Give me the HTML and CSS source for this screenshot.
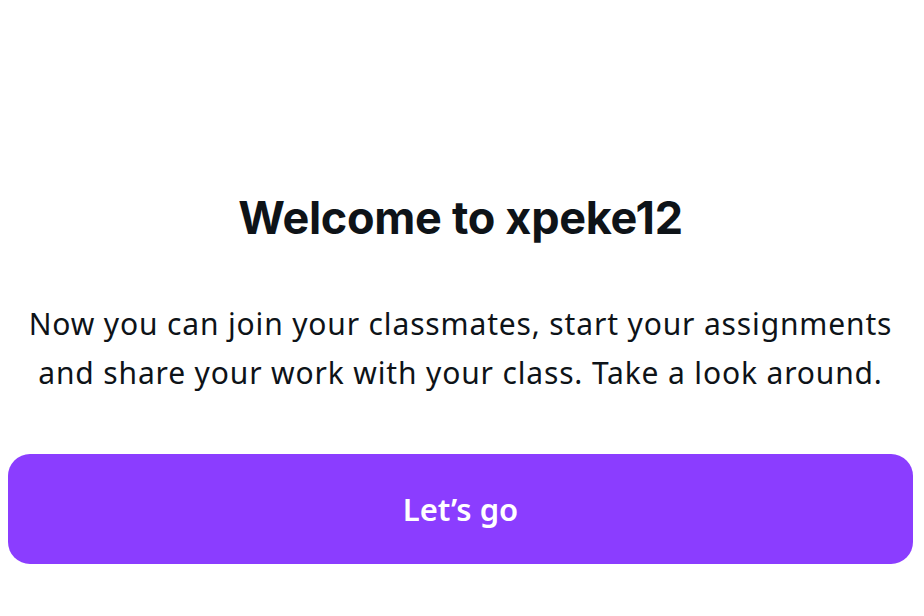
FILE: index.html
```html
<!DOCTYPE html>
<html lang="en">
<head>
<meta charset="utf-8">
<title>Welcome</title>
<link rel="stylesheet" href="styles.css">
</head>
<body>
  <main class="welcome">
    <h1 class="welcome-title">Welcome to xpeke12</h1>
    <p class="welcome-text">Now you can join your classmates, start your assignments and share your work with your class. Take a look around.</p>
    <button class="welcome-button" type="button">Let’s go</button>
  </main>
</body>
</html>
```

FILE: styles.css
```css
html, body {
  margin: 0;
  padding: 0;
  background: #ffffff;
}

body {
  font-family: "Noto Sans", "Open Sans", sans-serif;
  color: #0e1318;
}

.welcome {
  width: 905px;
  margin-left: 8px;
  padding-top: 190px;
  display: flex;
  flex-direction: column;
  align-items: center;
}

.welcome-title {
  margin: 0;
  font-family: "Inter", "Noto Sans", sans-serif;
  font-weight: 700;
  font-size: 45px;
  line-height: 56px;
  letter-spacing: -0.3px;
  color: #0e1318;
}

.welcome-text {
  margin: 53px 0 0;
  font-size: 30px;
  line-height: 49px;
  letter-spacing: 0.85px;
  text-align: center;
  color: #0e1318;
}

.welcome-button {
  margin-top: 57px;
  width: 100%;
  height: 110px;
  border: none;
  border-radius: 22px;
  background: #8b3dff;
  color: #ffffff;
  font-family: "Noto Sans", sans-serif;
  font-weight: 600;
  font-size: 31px;
  cursor: pointer;
}
```
